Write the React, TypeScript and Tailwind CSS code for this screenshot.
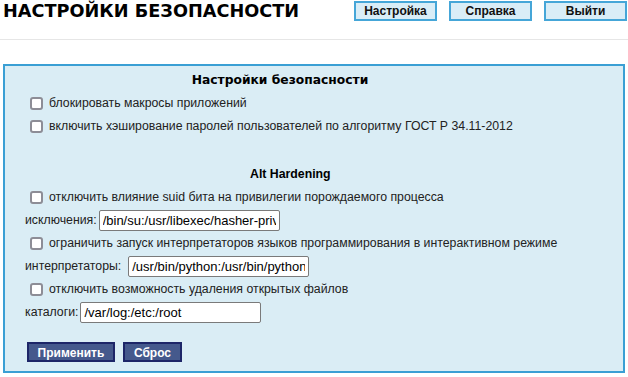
import React from "react";

function Check({ label }: { label: string }) {
  return (
    <div className="flex h-[23px] items-center whitespace-nowrap pl-[5px]">
      <span className="box-border h-[13px] w-[13px] shrink-0 rounded-[3px] border-2 border-[#8d8d96] bg-white" />
      <span className="ml-[6px]">{label}</span>
    </div>
  );
}

function Field({ label, value, wide }: { label: string; value: string; wide?: boolean }) {
  return (
    <div className="flex h-[23px] items-center whitespace-nowrap">
      <span className={wide ? "mr-[7px]" : "mr-[2px]"}>{label}</span>
      <input
        readOnly
        value={value}
        className="box-border h-[21px] w-[181px] shrink-0 rounded-[2px] border border-[#7a7a7a] bg-white px-[3px] text-[13px] text-black outline-none"
      />
    </div>
  );
}

export default function App() {
  return (
    <div className="h-[377px] w-[628px] overflow-hidden bg-white text-[12.3px] text-[#222] [font-family:'Liberation_Sans',Arial,sans-serif]">
      {/* Header */}
      <div className="flex h-[39px] items-start justify-between pl-[3px] pr-[1px]">
        <h1 className="text-[17.7px] font-bold leading-[22px] text-black [font-family:'DejaVu_Sans',sans-serif]">
          НАСТРОЙКИ БЕЗОПАСНОСТИ
        </h1>
        <div className="mt-[1px] flex gap-[12px]">
          {["Настройка", "Справка", "Выйти"].map((b) => (
            <button
              key={b}
              className="box-border flex h-[20px] w-[83px] items-center justify-center border-2 border-[#45a6d8] bg-[#d9edf7] text-[12px] font-bold text-[#111]"
            >
              {b}
            </button>
          ))}
        </div>
      </div>
      <div className="h-px bg-[#e6e6e6]" />

      {/* Panel */}
      <div className="mx-[3px] mt-[24px] box-border h-[309px] border-2 border-[#3a9fd4] bg-[#daedf5] pl-[20px] pt-[2.5px]">
        <div className="w-[510px]">
          <div className="flex h-[23px] items-center justify-center whitespace-nowrap font-bold text-black [font-family:'DejaVu_Sans',sans-serif]">
            Настройки безопасности
          </div>
          <Check label="блокировать макросы приложений" />
          <Check label="включить хэширование паролей пользователей по алгоритму ГОСТ Р 34.11-2012" />
          <div className="h-[25px]" />
          <div className="flex h-[23px] items-center pl-[225px] font-bold text-black">
            Alt Hardening
          </div>
          <Check label="отключить влияние suid бита на привилегии порождаемого процесса" />
          <Field label="исключения:" value="/bin/su:/usr/libexec/hasher-priv/hasher-privd" />
          <Check label="ограничить запуск интерпретаторов языков программирования в интерактивном режиме" />
          <Field label="интерпретаторы:" value="/usr/bin/python:/usr/bin/python3" wide />
          <Check label="отключить возможность удаления открытых файлов" />
          <Field label="каталоги:" value="/var/log:/etc:/root" />
        </div>
        <div className="mt-[18.5px] flex gap-[8px] pl-[2px]">
          <button className="box-border h-[20px] w-[88px] border-2 border-[#1d2668] bg-[#45598c] text-[12px] font-bold text-white">
            Применить
          </button>
          <button className="box-border h-[20px] w-[59px] border-2 border-[#1d2668] bg-[#45598c] text-[12px] font-bold text-white">
            Сброс
          </button>
        </div>
      </div>
    </div>
  );
}
